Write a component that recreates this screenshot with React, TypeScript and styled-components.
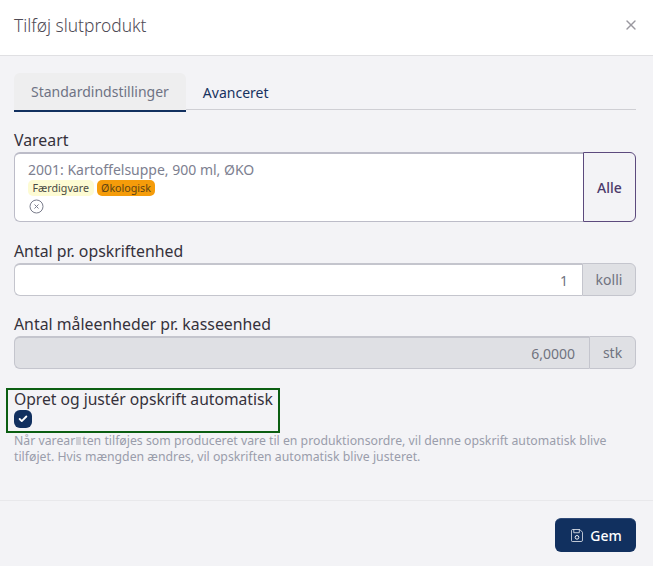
import styled, { createGlobalStyle } from "styled-components";
import { X, Check } from "lucide-react";

const GlobalStyle = createGlobalStyle`
  html, body {
    margin: 0;
    padding: 0;
    background: #f3f3f6;
    font-family: "Noto Sans", "Open Sans", sans-serif;
    color: #2f2b36;
  }
  * {
    box-sizing: border-box;
  }
`;

const Modal = styled.div`
  width: 653px;
  height: 566px;
  display: flex;
  flex-direction: column;
  overflow: hidden;
`;

const Header = styled.header`
  height: 56px;
  flex: none;
  background: #fff;
  border-bottom: 1px solid #e0e0e3;
  display: flex;
  align-items: center;
  justify-content: space-between;
  padding: 0 14px 5px 14px;
`;

const Title = styled.h1`
  margin: 0;
  font-size: 17.4px;
  font-weight: 300;
  color: #4f4b55;
`;

const Close = styled.span`
  display: flex;
  color: #9a989f;
`;

const Body = styled.main`
  flex: 1;
  padding: 17px 17px 0 14px;
`;

const Tabs = styled.nav`
  display: flex;
  height: 37px;
  border-bottom: 1px solid #cfcfd4;
`;

const Tab = styled.div<{ $active?: boolean }>`
  height: 39px;
  padding: 0 17px;
  display: flex;
  align-items: center;
  font-size: 14px;
  border-radius: 6px 6px 0 0;
  color: ${({ $active }) => ($active ? "#6f7384" : "#17325f")};
  background: ${({ $active }) => ($active ? "#eeeeef" : "transparent")};
  border-bottom: ${({ $active }) =>
    $active ? "2px solid #11305f" : "none"};
`;

const Field = styled.section<{ $top: number }>`
  margin-top: ${({ $top }) => $top}px;
`;

const Label = styled.label`
  display: block;
  font-size: 15.85px;
  line-height: 21px;
  color: #35313b;
`;

const Group = styled.div<{ $height: number }>`
  display: flex;
  height: ${({ $height }) => $height}px;
  margin-top: 1px;
`;

const SelectBox = styled.div`
  flex: 1;
  background: #fff;
  border: 1px solid #bcbcc8;
  border-top-width: 2px;
  border-right: none;
  border-radius: 6px 0 0 6px;
  padding: 6px 13px;
`;

const SelectedText = styled.div`
  font-size: 14px;
  line-height: 19px;
  color: #7d8090;
`;

const Badges = styled.div`
  display: flex;
  gap: 3px;
  margin-top: 1px;
`;

const Badge = styled.span<{ $bg: string; $fg: string }>`
  height: 16px;
  padding: 0 4.5px;
  border-radius: 5px;
  font-size: 10.7px;
  line-height: 16px;
  background: ${({ $bg }) => $bg};
  color: ${({ $fg }) => $fg};
`;

const ClearIcon = styled.span`
  display: block;
  width: 15px;
  height: 15px;
  margin: 1px 0 0 1px;
  color: #7a7d8c;
`;

const AllButton = styled.button`
  width: 53px;
  border: 1px solid #5c4a7d;
  border-radius: 0 6px 6px 0;
  background: #f3f3f6;
  color: #4c3a6b;
  font: 500 14px "Noto Sans", sans-serif;
  padding: 0;
`;

const NumberInput = styled.div<{ $disabled?: boolean }>`
  flex: 1;
  display: flex;
  align-items: center;
  justify-content: flex-end;
  font-size: 14px;
  color: #70737f;
  padding-right: 14px;
  background: ${({ $disabled }) => ($disabled ? "#dfe0e4" : "#fff")};
  border: 1px solid #c4c5cd;
  border-top-width: 2px;
  border-right: none;
  border-radius: 6px 0 0 6px;
`;

const Unit = styled.div<{ $width: number }>`
  width: ${({ $width }) => $width}px;
  display: flex;
  align-items: center;
  justify-content: center;
  font-size: 14px;
  color: #70737f;
  background: #dfe0e4;
  border: 1px solid #c4c5cd;
  border-radius: 0 6px 6px 0;
`;

const AutoBox = styled.div`
  width: 274px;
  height: 45px;
  margin: 19px 0 0 -8px;
  padding: 0 6px;
  border: 2px solid #0b5e12;
  display: flex;
  flex-direction: column;
`;

const AutoLabel = styled.div`
  font-size: 15.65px;
  line-height: 19px;
  color: #35313b;
  white-space: nowrap;
`;

const CheckBox = styled.span`
  width: 18px;
  height: 18px;
  margin-top: 1px;
  border-radius: 6px;
  background: #11305f;
  color: #fff;
  display: flex;
  align-items: center;
  justify-content: center;
`;

const Help = styled.p`
  margin: 0;
  font-size: 12.27px;
  line-height: 15.5px;
  color: #9a9dab;
  white-space: nowrap;
`;

const Mark = styled.span`
  display: inline-block;
  width: 5px;
  height: 8px;
  margin: 0 1px;
  background: #cfcfd5;
`;

const Footer = styled.footer`
  height: 66px;
  flex: none;
  border-top: 1px solid #e8e8eb;
  display: flex;
  justify-content: flex-end;
  padding: 17px 17px 0 0;
`;

const SaveButton = styled.button`
  width: 81px;
  height: 34px;
  border: none;
  border-top: 1px solid #2f4a78;
  border-radius: 6px;
  background: #11305f;
  color: #fff;
  font: 500 14px "Noto Sans", sans-serif;
  display: flex;
  align-items: center;
  justify-content: center;
  gap: 7px;
  padding: 0 0 0 2px;
`;

const App = () => {
  return (
    <>
      <GlobalStyle />
      <Modal>
        <Header>
          <Title>Tilføj slutprodukt</Title>
          <Close>
            <X size={16} strokeWidth={2} />
          </Close>
        </Header>
        <Body>
          <Tabs>
            <Tab $active>Standardindstillinger</Tab>
            <Tab>Avanceret</Tab>
          </Tabs>
          <Field $top={20}>
            <Label>Vareart</Label>
            <Group $height={70}>
              <SelectBox>
                <SelectedText>2001: Kartoffelsuppe, 900 ml, ØKO</SelectedText>
                <Badges>
                  <Badge $bg="#fdfbd3" $fg="#4a4a44">
                    Færdigvare
                  </Badge>
                  <Badge $bg="#f59c0a" $fg="#5f4413">
                    Økologisk
                  </Badge>
                </Badges>
                <ClearIcon>
                  <svg width="15" height="15" viewBox="0 0 15 15" fill="none" stroke="currentColor">
                    <circle cx="7.5" cy="7.5" r="6.5" />
                    <path d="M5.5 5.5l4 4M9.5 5.5l-4 4" />
                  </svg>
                </ClearIcon>
              </SelectBox>
              <AllButton>Alle</AllButton>
            </Group>
          </Field>
          <Field $top={19}>
            <Label>Antal pr. opskriftenhed</Label>
            <Group $height={33}>
              <NumberInput>1</NumberInput>
              <Unit $width={54}>kolli</Unit>
            </Group>
          </Field>
          <Field $top={18}>
            <Label>Antal måleenheder pr. kasseenhed</Label>
            <Group $height={33}>
              <NumberInput $disabled>6,0000</NumberInput>
              <Unit $width={47}>stk</Unit>
            </Group>
          </Field>
          <AutoBox>
            <AutoLabel>Opret og justér opskrift automatisk</AutoLabel>
            <CheckBox>
              <Check size={10} strokeWidth={4.5} />
            </CheckBox>
          </AutoBox>
          <Help>
            Når varear<Mark />ten tilføjes som produceret vare til en produktionsordre, vil denne opskrift automatisk blive
            <br />
            tilføjet. Hvis mængden ændres, vil opskriften automatisk blive justeret.
          </Help>
        </Body>
        <Footer>
          <SaveButton>
            <svg width="12" height="13" viewBox="0 0 13 14" fill="none" stroke="currentColor" strokeWidth="1">
              <path d="M1.500.5h8l3 3v8.500a1.500 1.500 0 0 1-1.500 1.500h-9.500a1 1 0 0 1-1-1v-11a.5.5 0 0 1 .5-.5z" opacity="0.8" />
              <path d="M3 .5v3.500h6v-3.500" opacity="0.8" />
              <circle cx="6.500" cy="9" r="2" />
            </svg>
            Gem
          </SaveButton>
        </Footer>
      </Modal>
    </>
  );
};

export default App;
